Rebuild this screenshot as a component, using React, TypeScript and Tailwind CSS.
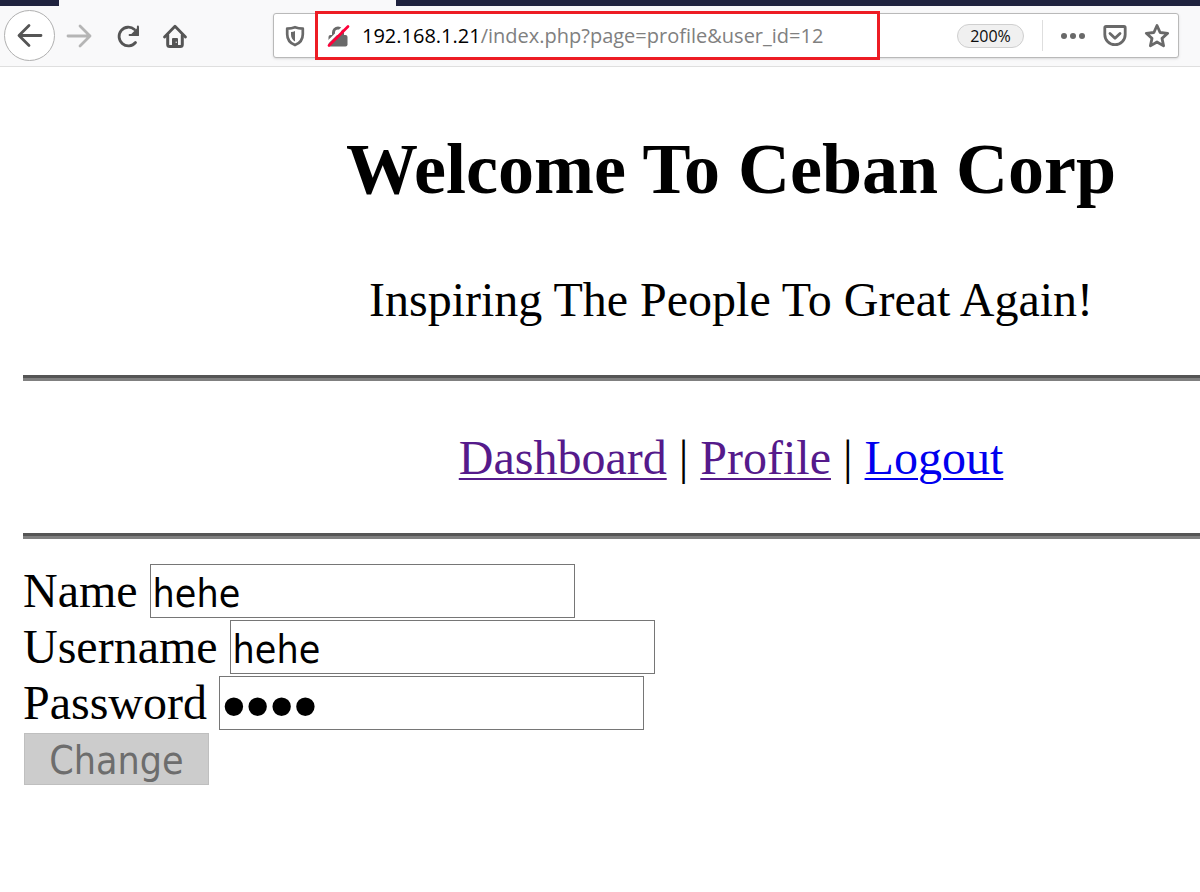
import type React from "react"

interface FieldProps {
  id: string
  label: string
  type: string
  value: string
}

export default function App() {
  return (
    <div className="min-h-screen overflow-hidden bg-white">
      <BrowserBar />
      <ProfilePage />
    </div>
  )
}

function BrowserBar() {
  return (
    <header className="font-['Open_Sans','Noto_Sans',sans-serif]">
      <div className="flex h-1.5 bg-[#f9f9fa]">
        <div className="w-[59px] bg-[#20233f]"></div>
        <div className="ml-[337px] flex-1 bg-[#20233f]"></div>
      </div>
      <div className="flex items-center border-b border-[#dfdfdf] bg-[#f9f9fa] pt-1 pb-[5px] pl-1 pr-[21px]">
        <button
          type="button"
          aria-label="Back"
          className="flex size-[51px] items-center justify-center rounded-full border border-[#b0b0b0] bg-white text-[#555]"
        >
          <Icon>
            <path d="M25 13.500H3.500M13 3.500L3 13.500l10 10" />
          </Icon>
        </button>
        <button type="button" aria-label="Forward" className="ml-2.5 text-[#b5b5b5]">
          <Icon>
            <path d="M3 14h22M15 4l10 10-10 10" />
          </Icon>
        </button>
        <button type="button" aria-label="Reload" className="ml-5 text-[#555]">
          <Icon>
            <path d="M22.500 20.500A9.300 9.300 0 1 1 21.500 7.500" />
            <path d="M25.800 4.500v9.500h-9.500z" fill="currentColor" stroke="none" />
            <path d="M24.900 4.500v8.600h-8.300" strokeWidth="2" />
          </Icon>
        </button>
        <button type="button" aria-label="Home" className="ml-5 text-[#555]">
          <Icon>
            <path d="M3.500 15L14 4.200 24.500 15" />
            <path d="M6.700 13v9.500a2 2 0 0 0 2 2h10.600a2 2 0 0 0 2-2V13" strokeWidth="3" />
            <path d="M11 24.500v-7.500q0-1 1-1h4q1 0 1 1v7.500z" fill="currentColor" stroke="none" />
            <circle cx="15.200" cy="20.300" r="0.700" fill="#f9f9fa" stroke="none" />
          </Icon>
        </button>
        <AddressBar />
      </div>
    </header>
  )
}

function AddressBar() {
  return (
    <div className="relative ml-[84px] flex h-[45px] flex-1 items-center rounded-[3px] border border-[#b9b9b9] bg-white pr-[7px] pl-[9px] text-[#696969] shadow-sm">
      <button type="button" aria-label="Tracking protection">
        <svg viewBox="0 0 24 24" className="size-6" fill="none" stroke="currentColor">
          <path
            d="M12 3.200c-2.500.9-5 1.300-7.800 1.400v5.600c0 5.200 3 9 7.800 10.900 4.800-1.900 7.800-5.700 7.800-10.900V4.600C17 4.500 14.500 4.100 12 3.200z"
            strokeWidth="2.700"
            strokeLinejoin="round"
          />
          <path d="M12 7v10.600c-2.600-1.600-4-4-4-7V8q2.500-.1 4-1z" fill="currentColor" stroke="none" />
        </svg>
      </button>
      <button type="button" aria-label="Connection is not secure" className="ml-[19px]">
        <svg viewBox="0 0 24 24" className="size-6" fill="none">
          <path d="M7.500 12V8.500a4.500 4.500 0 0 1 9 0V12" stroke="#696969" strokeWidth="3" />
          <path d="M2.500 13q0-2 2-2h15q2 0 2 2v7.500q0 2-2 2h-15q-2 0-2-2z" fill="#696969" />
          <path d="M0.500 19.500L20.500 0" stroke="#fff" strokeWidth="2.500" />
          <path d="M3 21.500L22 2.500" stroke="#ff0039" strokeWidth="2.700" strokeLinecap="round" />
        </svg>
      </button>
      <div
        role="textbox"
        aria-label="Address"
        contentEditable
        suppressContentEditableWarning
        spellCheck={false}
        className="ml-3 flex-1 whitespace-nowrap text-[20px] leading-7 text-[#808080] outline-none"
      >
        <span className="text-black">192.168.1.21</span>/index.php?page=profile&amp;user_id=12
      </div>
      <button
        type="button"
        className="h-6 w-[67px] rounded-full border border-[#cfcfcf] bg-[#f0f0f0] text-[16px] leading-[22px] text-[#0c0c0d]"
      >
        200%
      </button>
      <div className="mr-4 ml-[18px] h-[31px] w-px bg-[#dedede]"></div>
      <button type="button" aria-label="Page actions">
        <svg viewBox="0 0 28 28" className="size-7" fill="currentColor">
          <circle cx="5" cy="14" r="3" />
          <circle cx="14" cy="14" r="3" />
          <circle cx="23" cy="14" r="3" />
        </svg>
      </button>
      <button type="button" aria-label="Save to Pocket" className="ml-3.5">
        <Icon>
          <path d="M5 4.500h18q1.200 0 1.200 1.200V12.500a10.200 10.200 0 0 1-20.400 0V5.700Q3.800 4.500 5 4.500z" />
          <path d="M9 11.500l5 4.800 5-4.800" />
        </Icon>
      </button>
      <button type="button" aria-label="Bookmark this page" className="ml-3.5">
        <Icon>
          <path d="M14 3.500l3.100 7 7.600.8-5.700 5.100 1.600 7.500-6.600-3.900-6.600 3.900L9 16.400l-5.700-5.100 7.600-.8z" />
        </Icon>
      </button>
      <div className="pointer-events-none absolute -top-[3px] left-[41px] h-[49px] w-[565px] border-[3px] border-[#ed1c24]"></div>
    </div>
  )
}

function Icon({ children }: { children: React.ReactNode }) {
  return (
    <svg
      viewBox="0 0 28 28"
      className="size-7"
      fill="none"
      stroke="currentColor"
      strokeWidth="2.800"
      strokeLinecap="round"
      strokeLinejoin="round"
    >
      {children}
    </svg>
  )
}

function ProfilePage() {
  // zoomed to 200%, so the page runs past the right edge of the window
  return (
    <main className="ml-[23px] w-[calc(100%+216px)] font-['Liberation_Serif',serif] text-[48px] leading-[55px] text-black">
      <div className="pt-[61px] text-center">
        <h2 className="text-[72px] leading-[83px] font-bold">Welcome To Ceban Corp</h2>
        <p className="mt-[61px]">Inspiring The People To Great Again!</p>
      </div>
      <Rule />
      <nav className="mt-[49px] text-center">
        <NavLink href="#dashboard" visited>
          Dashboard
        </NavLink>{" "}
        |{" "}
        <NavLink href="#profile" visited>
          Profile
        </NavLink>{" "}
        | <NavLink href="#logout">Logout</NavLink>
      </nav>
      <Rule />
      <form className="mt-[25px] flex flex-col items-start gap-0.5">
        <Field id="name" label="Name" type="text" value="hehe" />
        <Field id="username" label="Username" type="text" value="hehe" />
        <Field id="password" label="Password" type="password" value="hehe" />
        <button
          type="submit"
          disabled
          className="mt-px ml-px h-[52px] w-[185px] border border-[#bfbfbf] bg-[#cccccc] pt-1 font-['DejaVu_Sans_Condensed','Noto_Sans',sans-serif] text-[39px] leading-[46px] text-[#6d6d6d]"
        >
          Change
        </button>
      </form>
    </main>
  )
}

function NavLink({ href, visited, children }: { href: string; visited?: boolean; children: React.ReactNode }) {
  return (
    <a
      href={href}
      className={`underline decoration-2 underline-offset-4 ${visited ? "text-[#551a8b]" : "text-[#0000ee]"}`}
    >
      {children}
    </a>
  )
}

function Rule() {
  return <div role="separator" className="mt-12 h-1.5 border-y-[3px] border-t-[#555] border-b-[#808080]"></div>
}

function Field({ id, label, type, value }: FieldProps) {
  return (
    <div className="flex items-center gap-3">
      <label htmlFor={id} className="leading-[54px]">
        {label}
      </label>
      <input
        id={id}
        type={type}
        defaultValue={value}
        className={`h-[54px] w-[425px] border border-[#767676] bg-white px-0.5 pt-1 text-black outline-none ${
          type === "password"
            ? "font-['Liberation_Sans',sans-serif] text-[68px]"
            : "font-['DejaVu_Sans_Condensed','Noto_Sans',sans-serif] text-[39px]"
        }`}
      />
    </div>
  )
}
